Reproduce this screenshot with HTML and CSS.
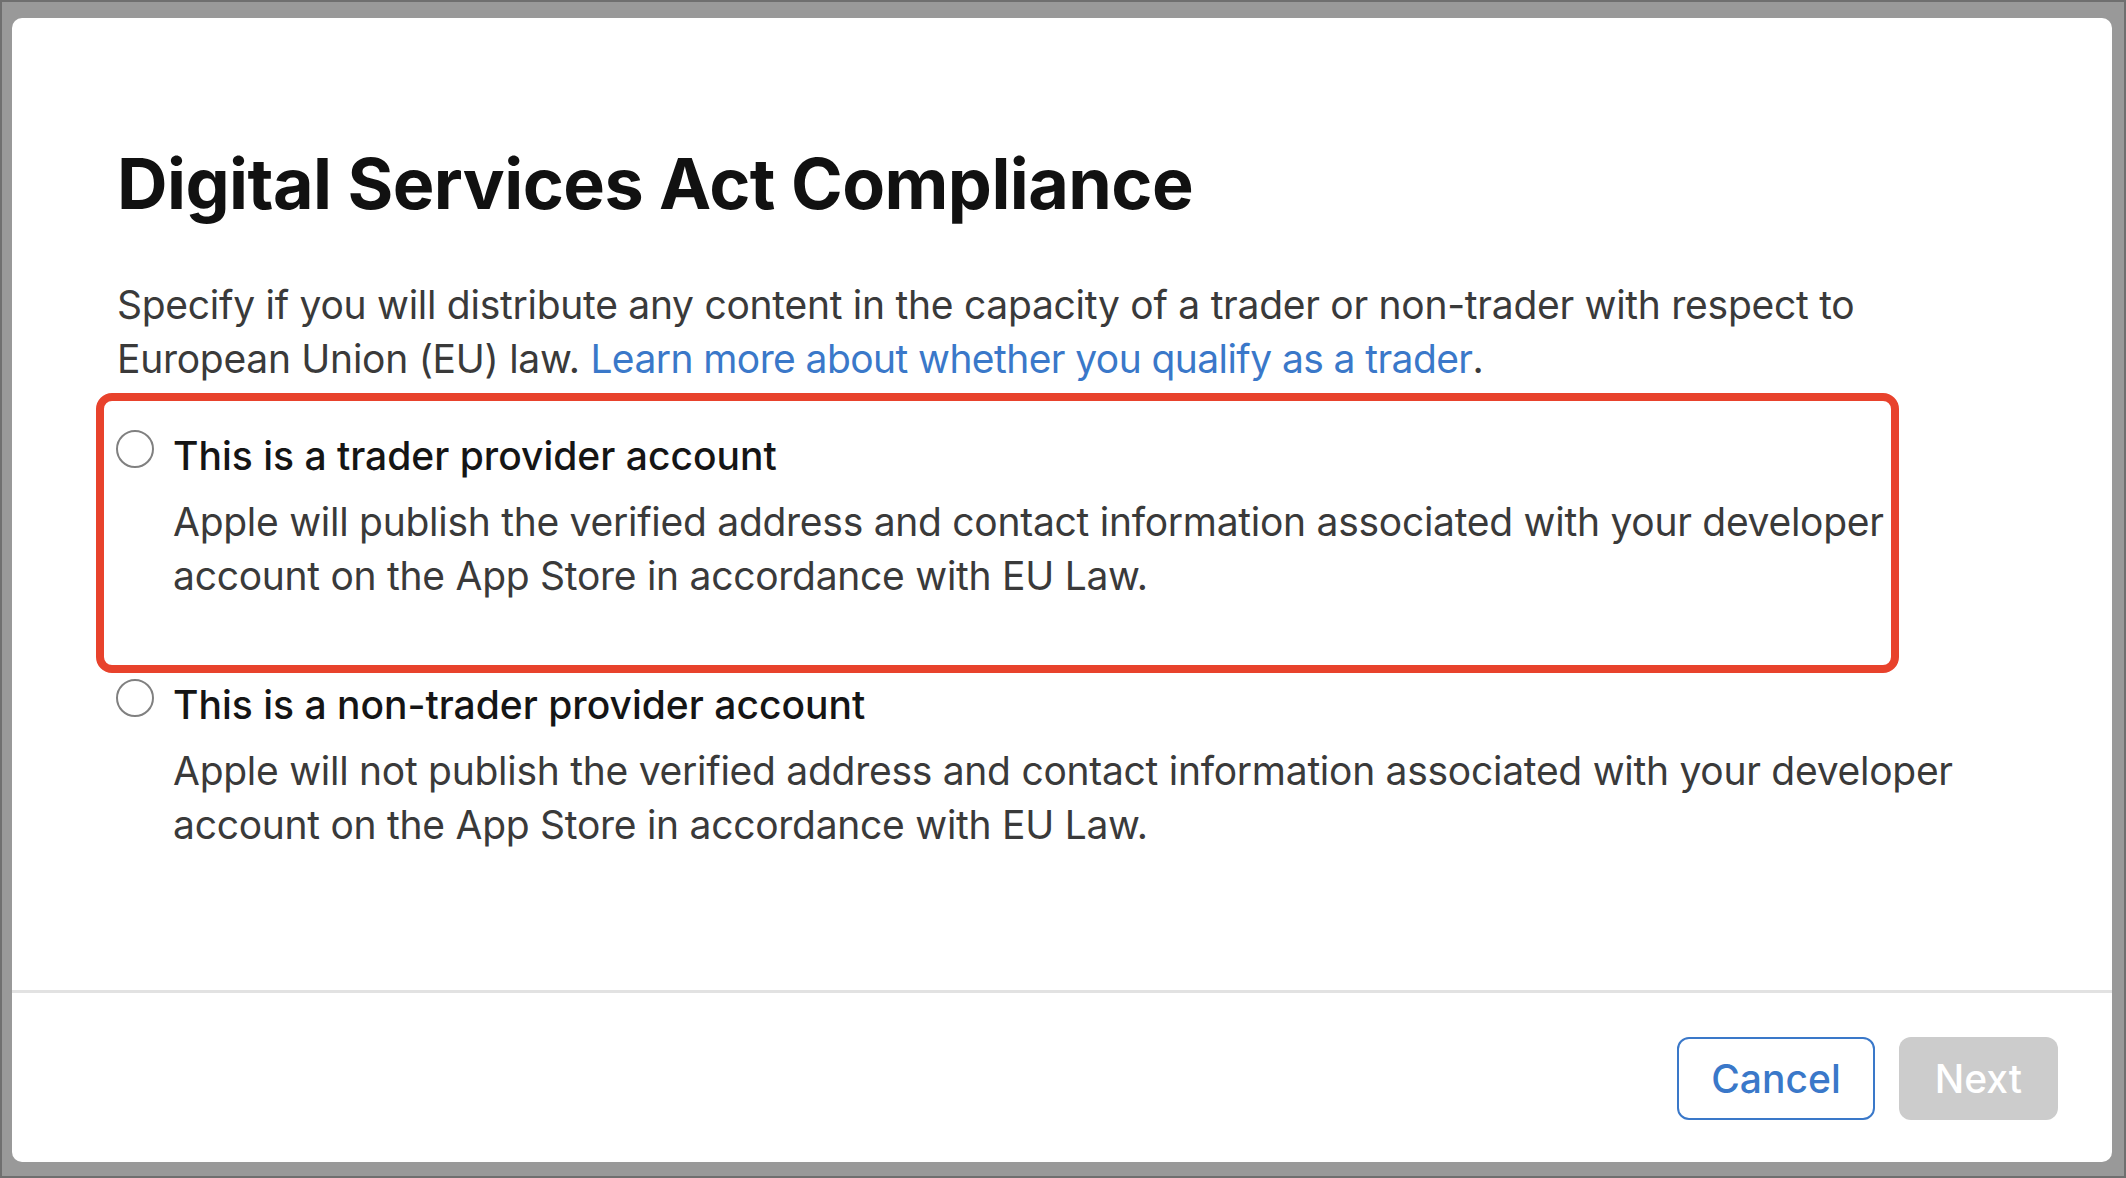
FILE: index.html
```html
<!DOCTYPE html>
<html lang="en">
<head>
  <meta charset="UTF-8" />
  <meta name="viewport" content="width=device-width, initial-scale=1.0"/>
  <title>Digital Services Act Compliance</title>
  <link rel="stylesheet" href="styles.css">
</head>
<body>
  <div class="screen">
    <div class="modal">
      <div class="modal-body">
        <h1>Digital Services Act Compliance</h1>
        <p class="intro">
          Specify if you will distribute any content in the capacity of a trader or non-trader with respect to
          European Union (EU) law. <a href="#">Learn more about whether you qualify as a trader</a>.
        </p>

        <div class="options">
          <label class="option highlighted">
            <span class="radio"></span>
            <span class="option-text">
              <span class="option-title">This is a trader provider account</span>
              <span class="option-desc">Apple will publish the verified address and contact information associated with your developer account on the App Store in accordance with EU Law.</span>
            </span>
            <span class="callout"></span>
          </label>

          <label class="option">
            <span class="radio"></span>
            <span class="option-text">
              <span class="option-title">This is a non-trader provider account</span>
              <span class="option-desc">Apple will not publish the verified address and contact information associated with your developer account on the App Store in accordance with EU Law.</span>
            </span>
          </label>
        </div>
      </div>

      <div class="modal-footer">
        <button class="btn btn-outline">Cancel</button>
        <button class="btn btn-disabled" disabled>Next</button>
      </div>
    </div>
  </div>
</body>
</html>
```

FILE: styles.css
```css
* {
  box-sizing: border-box;
}

body {
  margin: 0;
  background-color: #999999;
  font-family: Inter, "Noto Sans", Arial, sans-serif;
}

.screen {
  height: 100vh;
  border: 2px solid #6f6f6f;
  padding: 16px 12px 14px 10px;
}

.modal {
  height: 100%;
  background: white;
  border-radius: 10px;
  display: flex;
  flex-direction: column;
}

.modal-body {
  flex: 1;
  padding: 124px 120px 0 105px;
}

h1 {
  margin: 0;
  font-size: 70px;
  line-height: 84px;
  font-weight: 700;
  letter-spacing: -0.008em;
  color: #111;
}

.intro {
  margin: 52px 0 0;
  font-size: 39px;
  line-height: 54px;
  color: #3a3a3a;
  letter-spacing: -0.007em;
}

.intro a {
  color: #3a78c9;
  text-decoration: none;
  letter-spacing: -0.015em;
}

.options {
  margin: 43px 0 0 -1px;
  display: flex;
  flex-direction: column;
  gap: 75px;
}

.option {
  position: relative;
  display: flex;
  align-items: flex-start;
  gap: 19px;
  cursor: pointer;
}

.radio {
  flex: none;
  width: 38px;
  height: 38px;
  margin-top: 1px;
  border: 2.5px solid #808080;
  border-radius: 50%;
  background: white;
}

.option-text {
  display: flex;
  flex-direction: column;
  gap: 12px;
}

.option-title {
  font-size: 39px;
  line-height: 54px;
  font-weight: 500;
  color: #151515;
  letter-spacing: 0;
}

.option-desc {
  font-size: 39px;
  line-height: 54px;
  color: #3a3a3a;
  letter-spacing: -0.007em;
}

/* red annotation box drawn over the first option */
.callout {
  position: absolute;
  top: -36px;
  left: -20px;
  width: 1803px;
  height: 280px;
  border: 8px solid #e8422c;
  border-radius: 16px;
  pointer-events: none;
}

.modal-footer {
  border-top: 3px solid #e2e2e2;
  padding: 44px 54px 42px;
  display: flex;
  justify-content: flex-end;
  gap: 24px;
}

.btn {
  height: 83px;
  padding: 0 32px;
  border-radius: 12px;
  font-family: inherit;
  font-size: 39px;
  font-weight: 500;
  cursor: pointer;
}

.btn-outline {
  background: white;
  border: 2.5px solid #3a78c9;
  color: #3a78c9;
}

.btn-disabled {
  background: #cccccc;
  border: none;
  padding: 0 36px;
  color: #ffffff;
  cursor: default;
}
```
